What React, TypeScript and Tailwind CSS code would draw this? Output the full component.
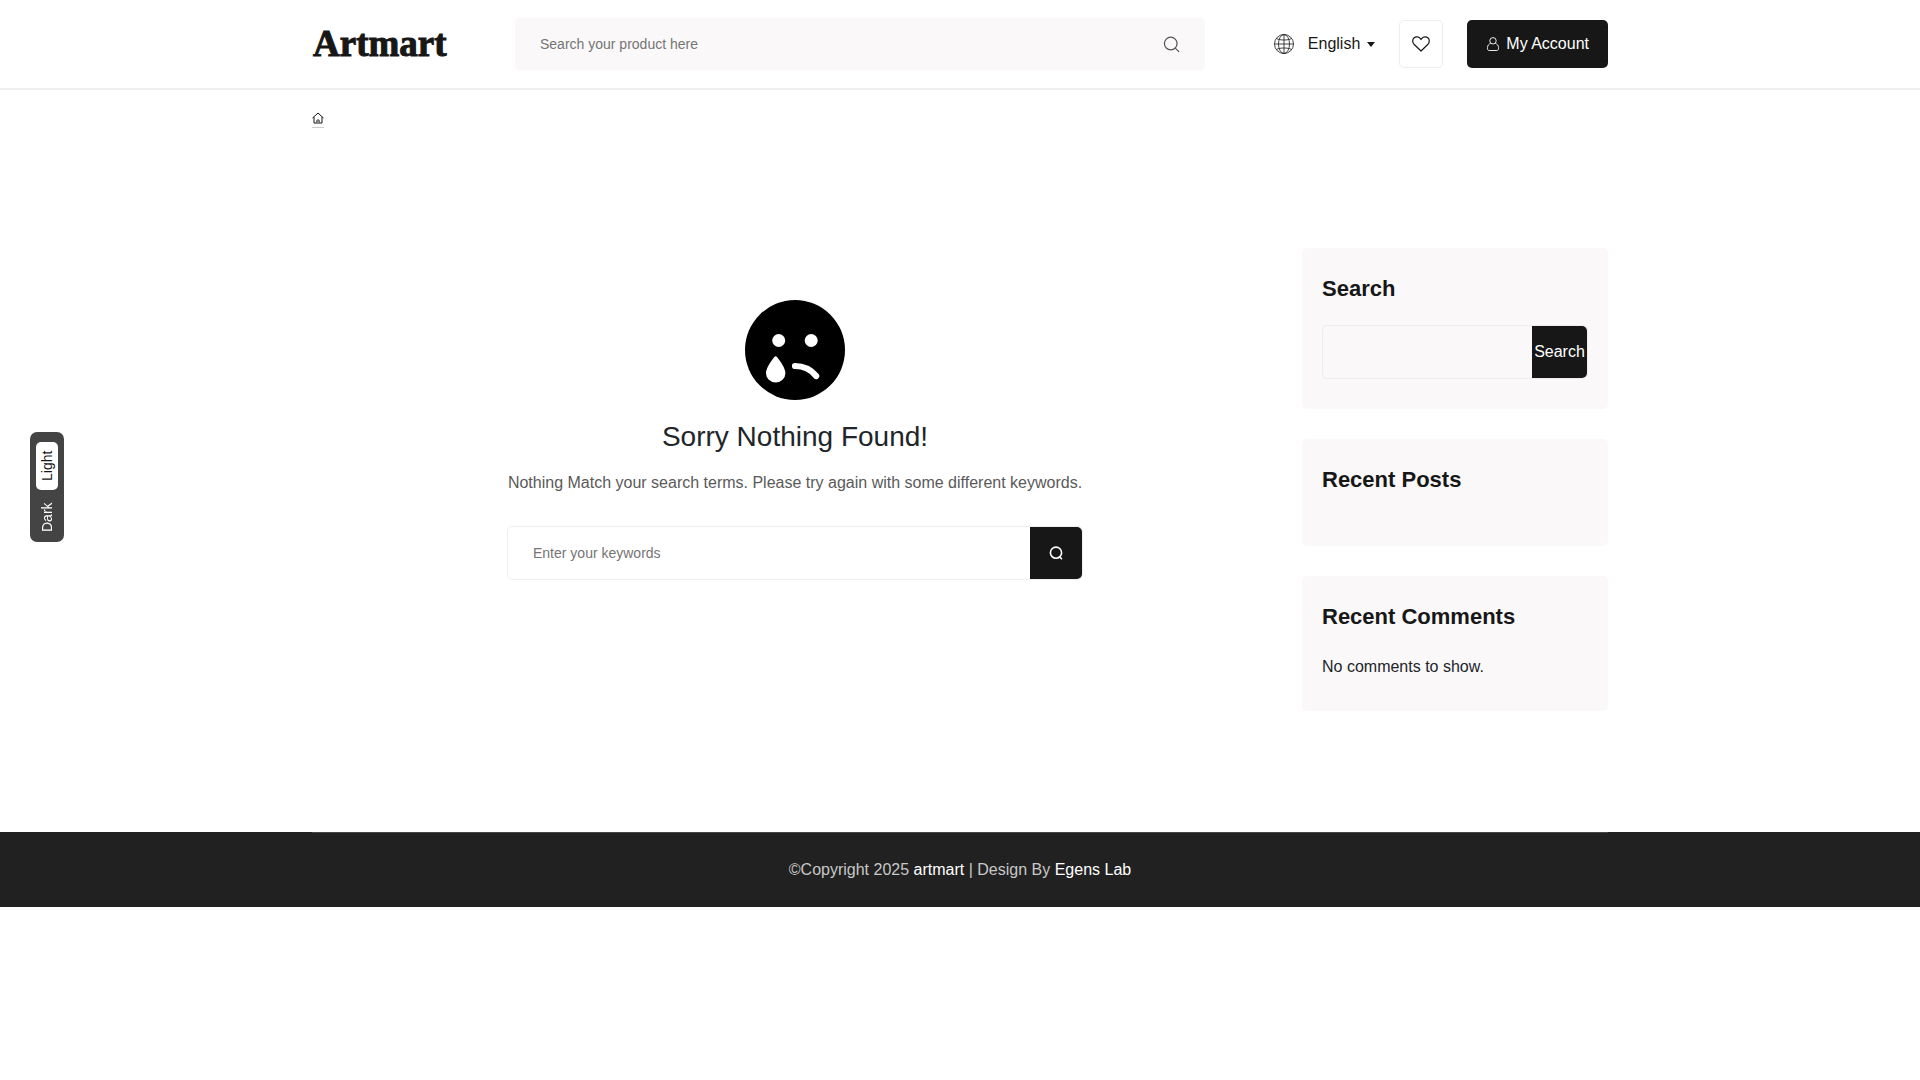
import type { ReactNode } from "react";

const CONTAINER = "mx-auto w-full max-w-[1320px] px-3";

function SearchIcon({ className }: { className?: string }) {
  return (
    <svg viewBox="0 0 18 18" fill="none" stroke="currentColor" className={className} aria-hidden="true">
      <circle cx="8.2" cy="8" r="6.7" />
      <path d="M13 12.8l4 4" />
    </svg>
  );
}

// Round search glyph with a short tail, used on the dark submit button
function SearchShortIcon() {
  return (
    <svg viewBox="0 0 14 14" width="14" height="14" fill="none" stroke="currentColor" strokeWidth="1.6" aria-hidden="true">
      <circle cx="7" cy="6.700" r="5.600" />
      <path d="M10.300 10.300l2.600 2.900" />
    </svg>
  );
}

function GlobeIcon() {
  return (
    <svg viewBox="0 0 20 20" width="20" height="20" fill="none" stroke="currentColor" strokeWidth=".8" aria-hidden="true">
      <circle cx="10" cy="10" r="9.500" />
      <ellipse cx="10" cy="10" rx="5.500" ry="9.500" />
      <path d="M10 .5v19M.5 10h19M2.500 4.500C4.500 5.600 7 6 10 6s5.500-.4 7.500-1.500M2.500 15.500C4.500 14.400 7 14 10 14s5.500.4 7.500 1.500" />
    </svg>
  );
}

function HeartIcon() {
  return (
    <svg viewBox="0 0 18 16" width="18" height="16" fill="none" stroke="currentColor" strokeWidth="1.2" strokeLinejoin="round" aria-hidden="true">
      <path d="M9 15L2 8.200C.2 6.300.4 3.400 1.900 2 3.800.2 6.700.5 8.100 2.300L9 3.500l.9-1.200C11.300.5 14.200.2 16.100 2c1.500 1.400 1.700 4.300-.1 6.200L9 15z" />
    </svg>
  );
}

function UserIcon() {
  return (
    <svg viewBox="0 0 12 14" width="12" height="14" fill="none" stroke="currentColor" strokeWidth=".9" aria-hidden="true">
      <circle cx="6" cy="3.800" r="3.200" />
      <path d="M3.600 6.400C1.700 7 .5 8.600.5 10.600v1.200c0 1 .7 1.700 1.700 1.700h7.600c1 0 1.700-.7 1.700-1.700v-1.200c0-2-1.200-3.600-3.100-4.200" />
    </svg>
  );
}

function HomeIcon() {
  return (
    <svg viewBox="0 0 12 12" width="12" height="12" fill="none" stroke="currentColor" aria-hidden="true">
      <path d="M.5 6L6 1l5.500 5M2 5v6h8V5" />
      <path d="M4.500 11V9.200a1.500 1.500 0 013 0V11" fill="#888888" stroke="#666666" />
    </svg>
  );
}

function SadFace() {
  return (
    <svg viewBox="0 0 100 100" width="100" height="100" aria-hidden="true">
      <circle cx="50" cy="50" r="50" fill="#000000" />
      <circle cx="33.700" cy="40.500" r="6.500" fill="#ffffff" />
      <circle cx="66.200" cy="40.500" r="6.500" fill="#ffffff" />
      <path
        d="M32 57c4 5 8.400 11.500 8.400 16.200a9.700 9.300 0 01-19.400 0C21 68.500 25.400 62 29.300 57c.9-1.100 1.900-1.100 2.700 0z"
        fill="#ffffff"
      />
      <path d="M50 66c9 0 16 3.500 21.200 10" fill="none" stroke="#ffffff" strokeWidth="6.200" strokeLinecap="round" />
    </svg>
  );
}

function Widget({ title, children }: { title: string; children?: ReactNode }) {
  return (
    <section className="rounded-[5px] bg-[#faf8f9] px-5 pt-[25px] pb-[30px]">
      <h2 className="mb-5 text-[22px] leading-8 font-bold text-[#171717]">{title}</h2>
      {children}
    </section>
  );
}

function Header() {
  return (
    <header className="border-b-2 border-[#eeeeee]">
      <div className={`${CONTAINER} flex h-[88px] items-center`}>
        <a
          href="#"
          className="w-[203px] shrink-0 pl-px font-['Liberation_Serif',serif] text-[37px] leading-10 font-bold [-webkit-text-stroke:1px_#171717]"
        >
          Artmart
        </a>
        <form className="flex h-[52px] max-w-[690px] flex-1 items-center rounded-[5px] bg-[#faf8f9] px-[25px]">
          <input
            type="text"
            aria-label="Search products"
            placeholder="Search your product here"
            className="h-full min-w-0 flex-1 bg-transparent text-sm outline-none placeholder:text-[#757575]"
          />
          <button type="submit" aria-label="Search" className="text-[#555555]">
            <SearchIcon className="size-[17px] stroke-[1.3]" />
          </button>
        </form>
        <div className="ml-auto flex items-center">
          <button type="button" className="flex items-center text-base">
            <GlobeIcon />
            <span className="ml-[14px]">English</span>
            <span className="ml-[7px] border-x-4 border-t-[5px] border-x-transparent border-t-[#171717]" />
          </button>
          <a
            href="#"
            aria-label="Wishlist"
            className="ml-6 flex h-12 w-11 items-center justify-center rounded-[5px] border border-[#eeeeee]"
          >
            <HeartIcon />
          </a>
          <a
            href="#"
            className="ml-6 flex h-12 items-center gap-[7px] rounded-[5px] bg-[#171717] pr-[19px] pl-5 text-base text-white"
          >
            <UserIcon />
            <span>My Account</span>
          </a>
        </div>
      </div>
    </header>
  );
}

function NothingFound() {
  return (
    <main className="flex flex-1 flex-col items-center pt-[52px]">
      <SadFace />
      <h1 className="mt-[17px] text-[28px] leading-10 text-[#212529]">Sorry Nothing Found!</h1>
      <div className="w-full max-w-[576px]">
        <p className="mt-3 text-center text-base leading-7 text-[#5a5a5a]">
          Nothing Match your search terms. Please try again with some different keywords.
        </p>
        <form className="mt-[29px] flex h-[54px] rounded-[5px] border border-[#eeeeee]">
          <input
            type="text"
            aria-label="Keywords"
            placeholder="Enter your keywords"
            className="min-w-0 flex-1 bg-transparent px-[25px] text-sm outline-none placeholder:text-[#757575]"
          />
          <button
            type="submit"
            aria-label="Search"
            className="flex w-[52px] items-center justify-center rounded-r-[5px] bg-[#171717] text-white"
          >
            <SearchShortIcon />
          </button>
        </form>
      </div>
    </main>
  );
}

function Sidebar() {
  return (
    <aside className="flex w-[306px] shrink-0 flex-col gap-[30px]">
      <Widget title="Search">
        <form className="flex h-[54px] rounded-[5px] border border-[#eeeeee]">
          <input type="search" aria-label="Search" className="min-w-0 flex-1 bg-transparent px-4 outline-none" />
          <button type="submit" className="w-[55px] rounded-r-[5px] bg-[#171717] text-base text-white">
            Search
          </button>
        </form>
      </Widget>
      <Widget title="Recent Posts" />
      <Widget title="Recent Comments">
        <p className="text-base leading-7 text-[#212529]">No comments to show.</p>
      </Widget>
    </aside>
  );
}

function ThemeSwitch() {
  return (
    <div className="fixed top-[432px] left-[30px] flex w-[34px] flex-col items-center gap-1 rounded-[7px] bg-[#444444] pt-[10px] pb-[2px] text-sm">
      <button
        type="button"
        className="h-12 w-[22px] rotate-180 rounded-[5px] bg-white text-center leading-[22px] text-[#171717] [writing-mode:vertical-rl]"
      >
        Light
      </button>
      <button
        type="button"
        className="h-[46px] w-[22px] rotate-180 text-center leading-[22px] text-white [writing-mode:vertical-rl]"
      >
        Dark
      </button>
    </div>
  );
}

export default function App() {
  return (
    <div className="bg-white font-['Liberation_Sans',Arial,sans-serif] text-[#171717]">
      <Header />
      <nav aria-label="Breadcrumb" className={`${CONTAINER} flex pt-[22px]`}>
        <a href="#" aria-label="Home" className="border-b border-[#cccccc] pb-[3px]">
          <HomeIcon />
        </a>
      </nav>
      <div className={`${CONTAINER} flex gap-6 pt-[120px] pb-[121px]`}>
        <NothingFound />
        <Sidebar />
      </div>
      <footer className="bg-[#212121]">
        <div className={CONTAINER}>
          <p className="border-t border-[#444444] py-[23px] text-center text-base leading-7 text-[#c8c8c8]">
            ©Copyright 2025{" "}
            <a href="#" className="text-white">
              artmart
            </a>{" "}
            | Design By{" "}
            <a href="#" className="text-white">
              Egens Lab
            </a>
          </p>
        </div>
      </footer>
      <ThemeSwitch />
    </div>
  );
}
